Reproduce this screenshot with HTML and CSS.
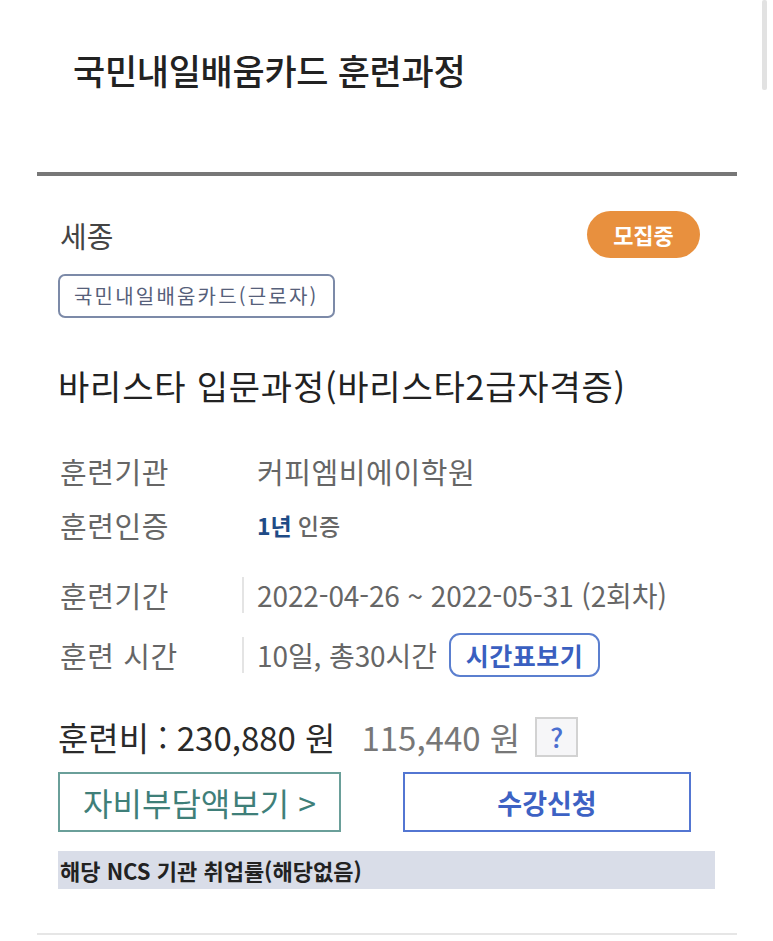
FILE: index.html
```html
<!DOCTYPE html>
<html lang="ko">
<head>
    <meta charset="UTF-8">
    <meta name="viewport" content="width=device-width, initial-scale=1.0">
    <title>국민내일배움카드 훈련과정</title>
    <link rel="stylesheet" href="styles.css">
</head>
<body>
    <div class="scrollbar"></div>
    <header class="page-head">
        <h1>국민내일배움카드 훈련과정</h1>
    </header>

    <div class="course">
        <div class="top-row">
            <span class="region">세종</span>
            <span class="badge">모집중</span>
        </div>
        <span class="tag">국민내일배움카드(근로자)</span>

        <h2 class="course-title">바리스타 입문과정(바리스타2급자격증)</h2>

        <div class="info">
            <div class="info-row">
                <span class="label">훈련기관</span>
                <span class="value academy">커피엠비에이학원</span>
            </div>
            <div class="info-row">
                <span class="label">훈련인증</span>
                <span class="value cert"><b>1년</b> 인증</span>
            </div>
            <div class="info-row split">
                <span class="label">훈련기간</span>
                <span class="value">2022-04-26 ~ 2022-05-31 (2회차)</span>
            </div>
            <div class="info-row split">
                <span class="label">훈련 시간</span>
                <span class="value">10일, 총30시간 <button class="timetable">시간표보기</button></span>
            </div>
        </div>

        <div class="price">
            <span class="price-main">훈련비 : 230,880 원</span>
            <span class="price-sub">115,440 원</span>
            <span class="help">?</span>
        </div>

        <div class="actions">
            <button class="self-pay">자비부담액보기 &gt;</button>
            <button class="apply">수강신청</button>
        </div>

        <div class="ncs">해당 NCS 기관 취업률(해당없음)</div>
    </div>
</body>
</html>
```

FILE: styles.css
```css
body {
    font-family: "Noto Sans CJK KR", "Noto Sans", sans-serif;
    margin: 0;
    padding: 0;
    background: #fff;
    color: #222;
}

.scrollbar {
    position: absolute;
    top: 0;
    right: 6px;
    width: 5px;
    height: 90px;
    background: #e2e2e2;
    border-radius: 2px;
}

.page-head {
    padding: 50px 0 0 73px;
    height: 122px;
}

.page-head h1 {
    margin: 0;
    font-size: 35px;
    line-height: 40px;
    font-weight: 500;
    color: #222;
    letter-spacing: -0.3px;
}

.course {
    margin: 0 36px 0 37px;
    padding: 0 22px 44px 21px;
    border-top: 4px solid #777;
    border-bottom: 2px solid #e6e6e6;
}

.top-row {
    display: flex;
    justify-content: space-between;
    align-items: center;
    margin-top: 35px;
    padding-right: 15px;
}

.region {
    font-size: 29px;
    color: #444;
    padding-left: 2px;
}

.badge {
    display: inline-block;
    width: 113px;
    height: 47px;
    line-height: 47px;
    text-align: center;
    background: #e8903e;
    color: #fff;
    font-size: 22px;
    font-weight: 700;
    border-radius: 24px;
}

.tag {
    display: inline-block;
    margin-top: 16px;
    height: 40px;
    line-height: 40px;
    padding: 0 14px;
    border: 2px solid #7c8aa8;
    border-radius: 7px;
    font-size: 20px;
    letter-spacing: 2.2px;
    color: #56607a;
}

.course-title {
    margin: 44px 0 0;
    font-size: 34px;
    line-height: 48px;
    font-weight: 400;
    color: #222;
    letter-spacing: 0.8px;
}

.info {
    margin-top: 34px;
}

.info-row {
    display: flex;
    align-items: center;
    height: 54px;
    font-size: 28px;
    color: #666;
}

.info-row.split {
    height: 44px;
}

.info-row.split:nth-child(3) {
    margin-top: 21px;
}

.info-row.split + .info-row.split {
    margin-top: 16px;
}

.label {
    width: 182px;
    padding-left: 2px;
    flex-shrink: 0;
    font-size: 29px;
    letter-spacing: 0.6px;
}

.value {
    display: flex;
    align-items: center;
    padding-left: 15px;
    white-space: nowrap;
}

.academy {
    font-size: 29px;
    letter-spacing: 0.6px;
}

.split .value {
    border-left: 2px solid #e4e4e4;
    padding-left: 13px;
    height: 36px;
    letter-spacing: -0.1px;
}

.cert {
    font-size: 23px;
    font-weight: 500;
    color: #666;
}

.cert b {
    color: #1f4b86;
    font-weight: 700;
    margin-right: 6px;
}

.timetable {
    margin-left: 12px;
    height: 44px;
    padding: 0 15px;
    border: 2px solid #5b7fcf;
    border-radius: 11px;
    background: #fff;
    font-family: inherit;
    font-size: 25px;
    font-weight: 700;
    color: #3a5fc0;
    letter-spacing: 0.5px;
}

.price {
    display: flex;
    align-items: center;
    margin-top: 40px;
    height: 40px;
}

.price-main {
    font-size: 33px;
    color: #2a2a2a;
}

.price-sub {
    margin-left: 26px;
    font-size: 33px;
    color: #777;
}

.help {
    margin-left: 15px;
    width: 39px;
    height: 36px;
    line-height: 36px;
    border: 2px solid #d2d2d2;
    background: #f6f6f8;
    text-align: center;
    font-size: 27px;
    font-weight: 500;
    color: #4b6fd0;
}

.actions {
    display: flex;
    gap: 62px;
    margin-top: 15px;
}

.actions button {
    height: 60px;
    background: #fff;
    font-family: inherit;
    cursor: pointer;
}

.self-pay {
    width: 283px;
    border: 2px solid #6a9f99;
    font-size: 32px;
    color: #3f7f79;
}

.apply {
    width: 288px;
    border: 2px solid #5376d2;
    font-size: 27px;
    font-weight: 700;
    color: #3d62c4;
}

.ncs {
    margin-top: 19px;
    width: 655px;
    height: 38px;
    line-height: 38px;
    padding-left: 2px;
    background: #d9dde8;
    font-size: 22px;
    font-weight: 700;
    color: #222;
}
```
